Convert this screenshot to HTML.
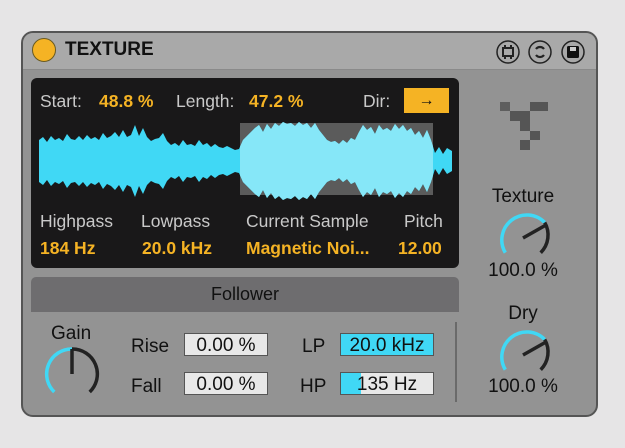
<!DOCTYPE html>
<html><head><style>
body{margin:0;width:625px;height:448px;background:#e6e5e6;position:relative;overflow:hidden;font-family:"Liberation Sans",sans-serif}
.a{position:absolute}
.dev{left:21px;top:31px;width:573px;height:382px;border:2px solid #555;border-radius:12px;background:#939393;overflow:hidden}
.title{left:0;top:0;width:573px;height:36px;background:#a9a9a9;border-bottom:1px solid #8a8a8a}
.panel{left:31px;top:78px;width:428px;height:190px;background:#191819;border-radius:6px}
.g{color:#c9c9c9;font-size:17.5px}
.o{color:#f5b324;font-size:17.5px;font-weight:bold}
.t{color:#111;font-size:19px}
.box{background:#e8e8e8;border:1px solid #555;height:23px;font-size:19px;color:#111;text-align:center;line-height:23px;box-sizing:border-box}
</style></head><body>
<div class="a dev">
 <div class="a title"></div>
</div>
<div class="a" style="left:32px;top:38px;width:22px;height:22px;border-radius:50%;background:#f5b324;border:1px solid #6a5a20"></div>
<div class="a" style="left:65px;top:39px;font-size:19px;font-weight:bold;color:#111">TEXTURE</div>
<svg class="a" style="left:495px;top:38px" width="95" height="28">
 <g fill="none" stroke="#222" stroke-width="1.5">
  <circle cx="13" cy="14" r="11"/><circle cx="45" cy="14" r="11"/><circle cx="78" cy="14" r="11"/>
  <rect x="8" y="10" width="10" height="8" stroke-width="2"/><path d="M10 7v3M16 7v3M10 18v3M16 18v3" stroke-width="2"/>
  <path d="M41 11a5 5 0 0 1 8 0M49 17a5 5 0 0 1-8 0" stroke-width="2.2"/>
 </g>
 <rect x="72" y="8" width="12" height="12" rx="1.5" fill="#111"/><rect x="75" y="9" width="6" height="4" fill="#ccc"/>
</svg>
<div class="a panel"></div>
<div class="a g" style="left:40px;top:91px">Start:</div>
<div class="a o" style="left:99px;top:91px">48.8 %</div>
<div class="a g" style="left:176px;top:91px">Length:</div>
<div class="a o" style="left:249px;top:91px">47.2 %</div>
<div class="a g" style="left:363px;top:91px">Dir:</div>
<div class="a" style="left:404px;top:88px;width:45px;height:25px;background:#f5b324;color:#111;font-size:16px;text-align:center;line-height:25px">→</div>
<div class="a" style="left:240px;top:123px;width:193px;height:72px;background:#5b5b5b"></div>
<svg class="a" style="left:0;top:0" width="625" height="448">
 <defs>
  <path id="w" d="M39 162 L39 140 43 137 47 142 51 136 55 140 59 138 63 141 67 134 71 139 75 140 79 136 83 140 87 135 91 139 95 137 99 140 103 133 107 138 111 136 115 132 119 137 123 130 127 137 131 135 135 125 139 136 143 128 147 137 151 141 155 139 159 138 163 133 167 141 171 145 175 143 179 146 183 140 187 145 191 144 195 146 199 140 203 145 207 143 211 147 215 144 219 147 223 148 227 146 231 148 235 150 239 149 243 140 247 136 251 132 255 128 259 125 263 132 267 124 271 129 275 123 279 126 283 122 287 124 291 123 295 126 299 122 303 125 307 123 311 128 315 123 319 130 323 135 327 140 331 142 335 141 339 144 343 140 347 143 351 138 355 140 359 132 363 125 367 130 371 127 375 134 379 125 383 130 387 128 391 131 395 124 399 129 403 125 407 131 411 128 415 135 419 131 423 138 427 130 431 140 435 153 439 147 443 154 447 148 452 151 L452 162Z"/>
  <clipPath id="c"><rect x="240" y="100" width="193" height="120"/></clipPath>
 </defs>
 <g fill="#40d8f5"><use href="#w"/><use href="#w" transform="translate(0,322) scale(1,-1)"/></g>
 <g fill="#86e7f8" clip-path="url(#c)"><use href="#w"/><use href="#w" transform="translate(0,322) scale(1,-1)"/></g>
 <g fill="#555"><rect x="500" y="102" width="10" height="9" fill="#5e5e5e"/><rect x="530" y="102" width="18" height="9"/><rect x="510" y="111" width="20" height="10"/><rect x="520" y="121" width="10" height="10"/><rect x="530" y="131" width="10" height="9"/><rect x="520" y="140" width="10" height="10"/></g>
 <g fill="none" stroke-width="3.5">
  <path d="M505.3 252.7 A25 25 0 0 1 544.7 222.5" stroke="#40d8f5"/><path d="M544.7 222.5 A25 25 0 0 1 540.7 252.7" stroke="#222"/>
  <path d="M523 238 L546 225" stroke="#222"/>
  <path d="M505.3 369.7 A25 25 0 0 1 544.7 339.5" stroke="#40d8f5"/><path d="M544.7 339.5 A25 25 0 0 1 540.7 369.7" stroke="#222"/>
  <path d="M523 355 L546 342" stroke="#222"/>
  <path d="M54.3 392 A25 25 0 0 1 72 349" stroke="#40d8f5"/><path d="M72 349 A25 25 0 0 1 89.7 392" stroke="#222"/>
  <path d="M72 349 L72 374" stroke="#222"/>
 </g>
 <line x1="456" y1="322" x2="456" y2="402" stroke="#6a6a6a" stroke-width="2"/>
</svg>
<div class="a g" style="left:40px;top:211px">Highpass</div>
<div class="a g" style="left:141px;top:211px">Lowpass</div>
<div class="a g" style="left:246px;top:211px">Current Sample</div>
<div class="a g" style="left:404px;top:211px">Pitch</div>
<div class="a o" style="left:40px;top:238px">184 Hz</div>
<div class="a o" style="left:142px;top:238px">20.0 kHz</div>
<div class="a o" style="left:246px;top:238px">Magnetic Noi...</div>
<div class="a o" style="left:398px;top:238px">12.00</div>
<div class="a t" style="left:486px;top:186px;width:74px;text-align:center">Texture</div>
<div class="a t" style="left:483px;top:260px;width:80px;text-align:center">100.0 %</div>
<div class="a t" style="left:486px;top:303px;width:74px;text-align:center">Dry</div>
<div class="a t" style="left:483px;top:376px;width:80px;text-align:center">100.0 %</div>
<div class="a" style="left:31px;top:277px;width:428px;height:35px;background:#6e6d6f;border-radius:5px 5px 0 0;font-size:18px;color:#111;text-align:center;line-height:35px">Follower</div>
<div class="a t" style="left:51px;top:323px">Gain</div>
<div class="a t" style="left:131px;top:336px">Rise</div>
<div class="a t" style="left:131px;top:376px">Fall</div>
<div class="a box" style="left:184px;top:333px;width:84px">0.00 %</div>
<div class="a box" style="left:184px;top:372px;width:84px">0.00 %</div>
<div class="a t" style="left:302px;top:336px">LP</div>
<div class="a t" style="left:300px;top:376px">HP</div>
<div class="a box" style="left:340px;top:333px;width:94px;background:#40d8f5">20.0 kHz</div>
<div class="a box" style="left:340px;top:372px;width:94px;background:linear-gradient(90deg,#40d8f5 0 20px,#e8e8e8 20px)">135 Hz</div>
</body></html>
